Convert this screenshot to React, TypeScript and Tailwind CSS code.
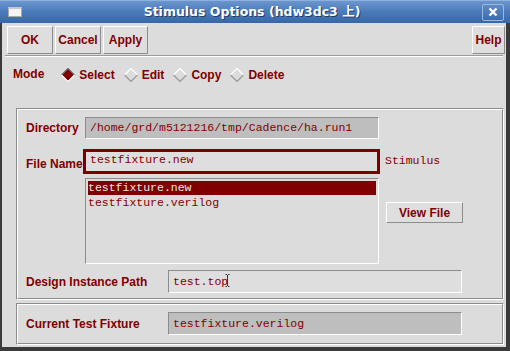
import React from 'react';

const RED = 'text-[#7f0000]';

function Diamond({ selected }: { selected?: boolean }) {
  return (
    <svg width="14" height="14" viewBox="0 0 14 14" className="shrink-0">
      <polygon points="7,0.5 13.5,7 7,13.5 0.5,7" fill={selected ? '#800000' : '#dcdcdc'} />
      <polyline
        points="0.5,7 7,0.5 13.5,7"
        fill="none"
        stroke={selected ? '#6a6a6a' : '#ffffff'}
        strokeWidth="1.2"
      />
      <polyline
        points="0.5,7 7,13.5 13.5,7"
        fill="none"
        stroke={selected ? '#ffffff' : '#9a9a9a'}
        strokeWidth="1.2"
      />
    </svg>
  );
}

function Radio({ label, selected }: { label: string; selected?: boolean }) {
  return (
    <div className="flex items-center gap-[4px] mr-[9px]">
      <Diamond selected={selected} />
      <span className={`${RED} text-[12px] font-bold leading-none`}>{label}</span>
    </div>
  );
}

function Button({ label, w, h = 'h-[28px]' }: { label: string; w: string; h?: string }) {
  return (
    <button
      type="button"
      className={`${w} ${h} ${RED} bg-[#dedede] border border-t-white border-l-white border-r-[#8c8c8c] border-b-[#8c8c8c] text-[12px] font-bold flex items-center justify-center`}
    >
      {label}
    </button>
  );
}

function Group({ children, className }: { children: React.ReactNode; className?: string }) {
  return (
    <div className={`ml-[14px] mr-[2px] border border-t-[#8c8c8c] border-l-[#8c8c8c] border-r-white border-b-white ${className ?? ''}`}>
      <div className="border border-t-white border-l-white border-r-[#8c8c8c] border-b-[#8c8c8c]">{children}</div>
    </div>
  );
}

function Field({ value, w, h, dark, cursor }: { value: string; w: string; h: string; dark?: boolean; cursor?: boolean }) {
  return (
    <div
      className={`${w} ${h} ${dark ? 'bg-[#bebebe]' : 'bg-[#dedede]'} border border-t-[#8c8c8c] border-l-[#8c8c8c] border-r-white border-b-white pl-[4px] flex items-center ${RED} text-[11.5px] leading-none`}
      style={{ fontFamily: '"Liberation Mono", monospace' }}
    >
      <span>{value}</span>
      {cursor && (
        <svg width="5" height="13" viewBox="0 0 5 13" className="-ml-[3px] -mt-[2px]">
          <path d="M0.5 0.5h1.5M3 0.5h1.5M2.5 1v11M0.5 12.5h1.5M3 12.5h1.5" stroke="#333" strokeWidth="1" />
        </svg>
      )}
    </div>
  );
}

export default function App() {
  const mono = { fontFamily: '"Liberation Mono", monospace' };
  return (
    <div
      className="w-[510px] h-[351px] bg-[#3a3a3a] flex flex-col overflow-hidden"
      style={{ fontFamily: '"Liberation Sans", Arial, sans-serif' }}
    >
      {/* title bar */}
      <div className="h-[23px] shrink-0 bg-gradient-to-b from-[#6b96cf] via-[#4a7aba] to-[#3867a8] border-t border-[#8fb0dc] flex items-center relative">
        <div className="ml-[8px] w-[14px] h-[10px] bg-[#f4f4f4] border border-[#a9a9a9] border-t-2 border-t-[#c8c8c8]" />
        <div
          className="flex-1 text-center text-white font-bold text-[12.5px] [text-shadow:1px_1px_0_#1f3d66]"
          style={{ fontFamily: '"DejaVu Sans", "Noto Sans CJK SC", sans-serif' }}
        >
          Stimulus Options (hdw3dc3 上)
        </div>
        <div className="mr-[6px] w-[22px] h-[17px] rounded-[2px] border border-[#9dbbe2] bg-gradient-to-b from-[#5e8bc8] to-[#3d6cae] flex items-center justify-center">
          <svg width="10" height="10" viewBox="0 0 10 10">
            <path d="M1.5 1.5L8.5 8.5M8.5 1.5L1.5 8.5" stroke="white" strokeWidth="2.4" />
          </svg>
        </div>
      </div>

      {/* body */}
      <div className="flex-1 flex flex-col bg-[#dcdcdc] ml-[2px] mr-[4px] mb-[4px]">
        <div className="flex pt-[3px] pl-[5px] pr-[1px] gap-[2px]">
          <Button label="OK" w="w-[46px]" />
          <Button label="Cancel" w="w-[46px]" />
          <Button label="Apply" w="w-[45px]" />
          <div className="flex-1" />
          <Button label="Help" w="w-[33px]" />
        </div>
        <div className="mt-[1px] mx-[3px] border-t border-[#9a9a9a] border-b border-b-white" />

        {/* mode row */}
        <div className="flex items-center mt-[11px] h-[14px] pl-[11px]">
          <span className={`${RED} text-[12px] font-bold leading-none -mt-[3px] mr-[17px]`}>Mode</span>
          <Radio label="Select" selected />
          <Radio label="Edit" />
          <Radio label="Copy" />
          <Radio label="Delete" />
        </div>

        <Group className="mt-[26px]">
          <div className="pt-[7px] pb-[5px] pl-[8px]">
            <div className="flex items-center h-[22px]">
              <span className={`${RED} w-[59px] text-[12px] font-bold`}>Directory</span>
              <Field value="/home/grd/m5121216/tmp/Cadence/ha.run1" w="w-[294px]" h="h-[22px]" dark />
            </div>
            <div className="flex items-center h-[25px] mt-[10px]">
              <span className={`${RED} w-[57px] text-[12px] font-bold mt-[4px]`}>File Name</span>
              <div
                className={`w-[297px] h-[25px] border-[3px] border-[#7a0000] bg-[#dedede] pl-[4px] pt-[1px] ${RED} text-[11.5px] leading-[14px]`}
                style={mono}
              >
                testfixture.new
              </div>
              <span className={`${RED} ml-[5px] text-[11.5px] -mt-[2px]`} style={mono}>
                Stimulus
              </span>
            </div>
            <div className="flex mt-[4px]">
              <div
                className="ml-[59px] w-[294px] h-[86px] bg-[#dcdcdc] border border-t-[#8c8c8c] border-l-[#8c8c8c] border-r-white border-b-white p-[2px] text-[11.5px] leading-[14px]"
                style={mono}
              >
                <div className="bg-[#800000] text-[#e8e8e8] h-[14px]">testfixture.new</div>
                <div className={`${RED} h-[14px] mt-[1px]`}>testfixture.verilog</div>
              </div>
              <div className="ml-[7px] mt-[24px]">
                <Button label="View File" w="w-[77px]" h="h-[21px]" />
              </div>
            </div>
            <div className="flex items-center h-[23px] mt-[6px]">
              <span className={`${RED} w-[142px] text-[12px] font-bold`}>Design Instance Path</span>
              <Field value="test.top" w="w-[294px]" h="h-[23px]" cursor />
            </div>
          </div>
        </Group>

        <Group className="mt-[3px]">
          <div className="pt-[7px] pb-[8px] pl-[8px]">
            <div className="flex items-center h-[23px]">
              <span className={`${RED} w-[142px] text-[12px] font-bold`}>Current Test Fixture</span>
              <Field value="testfixture.verilog" w="w-[294px]" h="h-[23px]" dark />
            </div>
          </div>
        </Group>
      </div>
    </div>
  );
}
